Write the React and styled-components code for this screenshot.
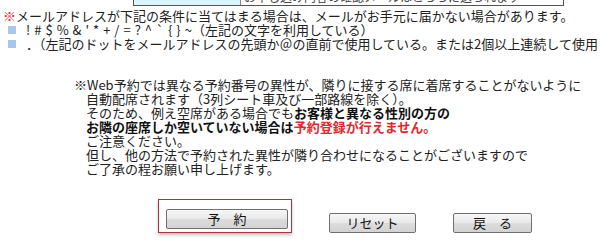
import React from 'react';
import styled, { createGlobalStyle } from 'styled-components';

const GlobalStyle = createGlobalStyle`
  html, body {
    margin: 0;
    padding: 0;
    background: #ffffff;
  }
  body {
    font-family: "Noto Sans CJK JP", "Liberation Sans", sans-serif;
    font-size: 13px;
    color: #222;
  }
`;

const Page = styled.div`
  width: 600px;
  height: 246px;
  overflow: hidden;
`;

const TopTable = styled.div`
  display: flex;
  margin-left: 133px;
  width: 431px;
  height: 6px;
  border: 1px solid #555;
  border-top: none;
  box-sizing: border-box;
  overflow: hidden;
`;

const LabelCell = styled.div`
  width: 106px;
  background: #d9f5fd;
  border-right: 1px solid #888;
`;

const ValueCell = styled.div`
  flex: 1;
  overflow: hidden;
  padding-left: 3px;
  font-size: 12px;
  line-height: 12px;
  white-space: nowrap;
  color: #444;
`;

const ValueText = styled.div`
  margin-top: -9px;
`;

const Notice = styled.div`
  padding: 3px 0 0 3px;
  line-height: 14px;
  white-space: nowrap;
`;

const Mark = styled.span`
  color: #e2231a;
`;

const Item = styled.div`
  display: flex;
  align-items: center;
  padding-left: 5px;
`;

const Square = styled.span`
  width: 8px;
  height: 8px;
  background: #a7c6ee;
  margin-right: 10px;
  flex-shrink: 0;
`;

const Symbols = styled.span`
  letter-spacing: 4px;
`;

const Caution = styled.div`
  margin: 27px 0 0 74px;
  line-height: 14px;
  white-space: nowrap;
`;

const Line = styled.div`
  padding-left: ${p => (p.$first ? 0 : 12)}px;
`;

const Strong = styled.span`
  font-weight: 700;
  color: ${p => (p.$red ? '#e0282e' : '#111')};
`;

const Buttons = styled.div`
  display: flex;
  align-items: flex-end;
  margin: 23px 0 0 158px;
`;

const Focus = styled.div`
  padding: 9px 3px 3px 7px;
  border: 1px solid #b2323c;
  box-shadow: 0 2px 3px rgba(0, 0, 0, 0.25);
`;

const Button = styled.button`
  width: ${p => p.$w}px;
  height: 20px;
  margin: 0;
  padding: 0;
  border: 1px solid #707070;
  border-radius: 2px;
  background: linear-gradient(#f6f6f6 0%, #e9e9e9 50%, #dcdcdc 51%, #d3d3d3 100%);
  font-family: "Noto Sans CJK JP", sans-serif;
  font-size: 13px;
  line-height: 18px;
  color: #111;
  display: flex;
  align-items: center;
  justify-content: center;
`;

const Spacer = styled.div`
  width: ${p => p.$w}px;
  flex-shrink: 0;
`;

export default function App() {
  return (
    <Page>
      <GlobalStyle />
      <TopTable>
        <LabelCell />
        <ValueCell>
          <ValueText>お申し込み内容の確認メールはこちらに送られます</ValueText>
        </ValueCell>
      </TopTable>
      <Notice>
        <div>
          <Mark>※</Mark>メールアドレスが下記の条件に当てはまる場合は、メールがお手元に届かない場合があります。
        </div>
        <Item>
          <Square />
          <Symbols>!#$%&'*+/=?^`{'{'}{'}'}</Symbols>~（左記の文字を利用している）
        </Item>
        <Item>
          <Square />．（左記のドットをメールアドレスの先頭か＠の直前で使用している。または2個以上連続して使用している）
        </Item>
      </Notice>
      <Caution>
        <Line $first>※Web予約では異なる予約番号の異性が、隣りに接する席に着席することがないように</Line>
        <Line>自動配席されます（3列シート車及び一部路線を除く）。</Line>
        <Line>
          そのため、例え空席がある場合でも<Strong>お客様と異なる性別の方の</Strong>
        </Line>
        <Line>
          <Strong>お隣の座席しか空いていない場合は</Strong>
          <Strong $red>予約登録が行えません。</Strong>
        </Line>
        <Line>ご注意ください。</Line>
        <Line>但し、他の方法で予約された異性が隣り合わせになることがございますので</Line>
        <Line>ご了承の程お願い申し上げます。</Line>
      </Caution>
      <Buttons>
        <Focus>
          <Button $w={122}>予　約</Button>
        </Focus>
        <Spacer $w={37} />
        <Button $w={87}>リセット</Button>
        <Spacer $w={37} />
        <Button $w={79}>戻　る</Button>
      </Buttons>
    </Page>
  );
}
